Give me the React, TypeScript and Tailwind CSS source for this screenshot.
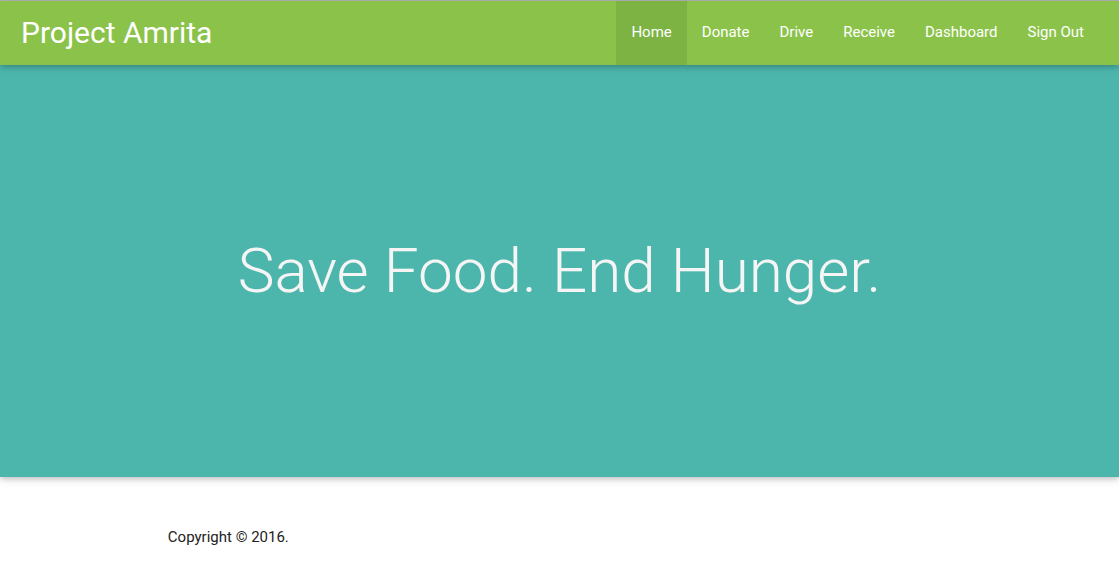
import React from "react";

export default function App() {
  const items = ["Home", "Donate", "Drive", "Receive", "Dashboard", "Sign Out"];
  return (
    <div className="min-h-[566px] bg-white" style={{ fontFamily: "Roboto, 'Noto Sans', sans-serif" }}>
      <div className="h-px bg-[#b5b5b5]" />
      <nav className="relative z-10 flex h-16 items-center justify-between bg-[#8bc34a] text-white shadow-[0_2px_5px_0_rgba(0,0,0,0.16),0_2px_10px_0_rgba(0,0,0,0.12)]">
        <a className="pl-[21px] text-[30px] leading-none">Project Amrita</a>
        <ul className="flex h-full pr-5">
          {items.map((it, i) => (
            <li key={it} className={`flex h-full items-center px-[15px] pb-[2px] text-[15px] ${i === 0 ? "bg-[#7cb342]" : ""}`}>
              {it}
            </li>
          ))}
        </ul>
      </nav>
      <section className="relative flex h-[412px] items-center justify-center bg-[#4db6ac] shadow-[0_2px_5px_0_rgba(0,0,0,0.16),0_2px_10px_0_rgba(0,0,0,0.12)]">
        <h1 className="text-[62px] leading-none text-[#f5f5f5] font-light">Save Food. End Hunger.</h1>
      </section>
      <footer className="mx-auto w-[70%] pt-[49px] text-[15px] text-[#222]">Copyright © 2016.</footer>
    </div>
  );
}
